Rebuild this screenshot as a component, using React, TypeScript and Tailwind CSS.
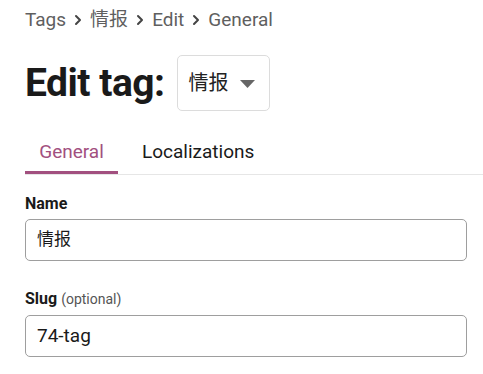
import { ChevronRight } from 'lucide-react';

const crumbs = ['Tags', '情报', 'Edit', 'General'];

export default function App() {
  return (
    <div
      className="min-h-screen bg-white text-[#1a1a1a]"
      style={{ fontFamily: 'Roboto, "Noto Sans CJK SC", sans-serif' }}
    >
      <div className="pt-[7px] pl-[25px]">
        <nav className="flex items-center h-[26px] text-[19px] text-[#5f5f5f]">
          {crumbs.map((c, i) => (
            <span key={c} className="flex items-center">
              {i > 0 && <ChevronRight className="w-[16px] h-[16px] mx-[4px] text-[#444]" strokeWidth={3} />}
              <span>{c}</span>
            </span>
          ))}
        </nav>

        <div className="flex items-center gap-[12px] mt-[22px]">
          <h1 className="text-[39px] font-bold leading-none tracking-[-0.5px] text-[#1a1a1a]">Edit tag:</h1>
          <button className="flex items-center gap-[11px] h-[56px] pl-[11px] pr-[14px] border border-[#dcdcdc] rounded-[5px] bg-white">
            <span className="text-[20px] text-[#222]">情报</span>
            <svg width="15" height="8" viewBox="0 0 15 8" className="mt-[1px]">
              <path d="M0 0 H15 L7.5 8 Z" fill="#666" />
            </svg>
          </button>
        </div>
      </div>

      <div className="mt-[23px] ml-[25px] flex border-b border-[#e6e6e6]">
        <div className="w-[93px] h-[40px] flex items-center justify-center text-[19px] text-[#a2507f] border-b-[3px] border-[#a2507f]">
          General
        </div>
        <div className="h-[40px] flex items-center px-[24px] text-[19px] text-[#1a1a1a] pb-[3px]">
          Localizations
        </div>
      </div>

      <div className="px-[25px] pr-[16px] pt-[19px]">
        <label className="block text-[16px] font-bold text-[#1a1a1a] leading-[20px]">Name</label>
        <div className="mt-[5px] h-[42px] flex items-center px-[11px] border border-[#9e9e9e] rounded-[5px] text-[17px] text-[#1a1a1a]">
          情报
        </div>

        <label className="block mt-[28px] leading-[20px]">
          <span className="text-[16px] font-bold text-[#1a1a1a]">Slug</span>{' '}
          <span className="text-[14px] text-[#555]">(optional)</span>
        </label>
        <div className="mt-[6px] h-[42px] flex items-center px-[11px] border border-[#9e9e9e] rounded-[5px] text-[19px] text-[#1a1a1a]">
          74-tag
        </div>
      </div>
    </div>
  );
}
